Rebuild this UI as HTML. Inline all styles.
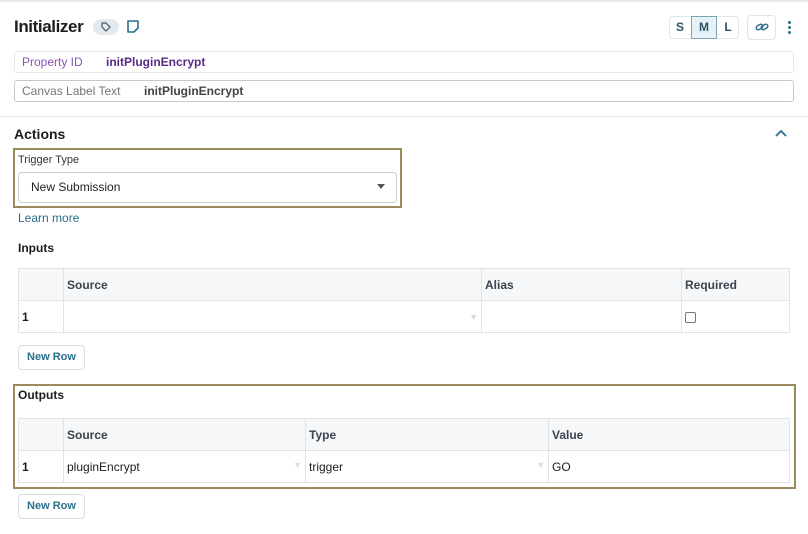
<!DOCTYPE html>
<html><head><meta charset="utf-8"><style>
*{box-sizing:border-box;margin:0;padding:0}
body{width:808px;height:534px;background:#fff;font-family:"Liberation Sans",sans-serif;position:relative;overflow:hidden;color:#1d1d1f}
.a{position:absolute}
.box{position:absolute;border:1px solid #ccc;border-radius:3px}
table{position:absolute;border-collapse:collapse;font-size:12px}
td{border:1px solid #dfe3e6;height:32px;padding:0 3px;vertical-align:middle}
tr.h td{background:#f5f7f8;font-weight:bold;color:#3a4550}
.btn{position:absolute;border:1px solid #d8e0e4;border-radius:4px;color:#2a6f8a;font-size:11px;font-weight:bold;text-align:center;line-height:23px;width:67px;height:25px}
.tri{color:#ddd;font-size:9px;float:right}
</style></head><body>
<div class="a" style="left:0;top:0;width:808px;height:2px;background:#e6eaec"></div>
<div class="a" style="left:14px;top:17px;font-size:17px;font-weight:bold;letter-spacing:-0.4px">Initializer</div>
<div class="a" style="left:93px;top:19px;width:26px;height:16px;border-radius:8px;background:#e4e9ee"></div>
<svg class="a" style="left:100px;top:21px" width="12" height="12" viewBox="0 0 12 12"><path d="M2 2h4l4 4-4 4-4-4z" fill="none" stroke="#3e5a6e" stroke-width="1.2"/></svg>
<svg class="a" style="left:126px;top:19px" width="14" height="15" viewBox="0 0 14 15"><path d="M2 2h10v7l-4 4H2z" fill="none" stroke="#2a6f8a" stroke-width="1.6" stroke-linejoin="round"/></svg>
<div class="a" style="left:669px;top:16px;width:70px;height:23px;border:1px solid #dbe5ea;border-radius:4px"></div>
<div class="a" style="left:691px;top:16px;width:26px;height:23px;border:1px solid #7fa5b4;background:#e6f2f5"></div>
<div class="a" style="left:669px;top:20px;width:22px;text-align:center;font-size:12px;font-weight:bold;color:#2d5467">S</div>
<div class="a" style="left:691px;top:20px;width:26px;text-align:center;font-size:12px;font-weight:bold;color:#2d5467">M</div>
<div class="a" style="left:717px;top:20px;width:22px;text-align:center;font-size:12px;font-weight:bold;color:#2d5467">L</div>
<div class="a" style="left:747px;top:15px;width:29px;height:25px;border:1px solid #dbe5ea;border-radius:4px"></div>
<svg class="a" style="left:755px;top:21px" width="14" height="12" viewBox="0 0 14 12"><g fill="none" stroke="#2a6f8a" stroke-width="1.4"><rect x="1" y="4" width="7" height="4" rx="2" transform="rotate(-30 4.5 6)"/><rect x="6" y="4" width="7" height="4" rx="2" transform="rotate(-30 9.5 6)"/></g></svg>
<div class="a" style="left:788px;top:21px;width:3px;height:3px;border-radius:2px;background:#2a6f8a;box-shadow:0 5px 0 #2a6f8a,0 10px 0 #2a6f8a"></div>
<div class="box" style="left:14px;top:51px;width:780px;height:22px;border-color:#ece4f0"></div>
<div class="a" style="left:22px;top:55px;font-size:12px;color:#8a55b0">Property ID</div>
<div class="a" style="left:106px;top:55px;font-size:12px;font-weight:bold;color:#5b2a86">initPluginEncrypt</div>
<div class="box" style="left:14px;top:80px;width:780px;height:22px;border-color:#c8c8c8"></div>
<div class="a" style="left:22px;top:84px;font-size:12px;color:#777">Canvas Label Text</div>
<div class="a" style="left:144px;top:84px;font-size:12px;font-weight:bold;color:#444">initPluginEncrypt</div>
<div class="a" style="left:0;top:116px;width:808px;height:1px;background:#e8eaec"></div>
<div class="a" style="left:14px;top:126px;font-size:14px;font-weight:bold">Actions</div>
<svg class="a" style="left:774px;top:128px" width="14" height="10" viewBox="0 0 14 10"><path d="M2 8l5-5 5 5" fill="none" stroke="#2a6f8a" stroke-width="1.8"/></svg>
<div class="a" style="left:13px;top:148px;width:389px;height:60px;border:2px solid #9a8a5c"></div>
<div class="a" style="left:18px;top:154px;font-size:11px;color:#333">Trigger Type</div>
<div class="box" style="left:18px;top:172px;width:379px;height:31px;border-radius:4px;border-color:#ccc"></div>
<div class="a" style="left:31px;top:180px;font-size:12px;color:#222">New Submission</div>
<div class="a" style="left:377px;top:184px;width:0;height:0;border-left:4px solid transparent;border-right:4px solid transparent;border-top:5px solid #555"></div>
<div class="a" style="left:18px;top:211px;font-size:12px;color:#2a6f8a">Learn more</div>
<div class="a" style="left:18px;top:241px;font-size:12px;font-weight:bold">Inputs</div>
<table style="left:18px;top:268px;width:772px">
<tr class="h"><td style="width:45px"></td><td style="width:418px">Source</td><td style="width:200px">Alias</td><td>Required</td></tr>
<tr><td style="font-weight:bold">1</td><td><span class="tri">▼</span></td><td></td><td><span style="display:inline-block;width:11px;height:11px;border:1px solid #777;border-radius:2px;vertical-align:middle"></span></td></tr>
</table>
<div class="btn" style="left:18px;top:345px">New Row</div>
<div class="a" style="left:13px;top:384px;width:783px;height:105px;border:2px solid #9a8a5c"></div>
<div class="a" style="left:18px;top:388px;font-size:12px;font-weight:bold">Outputs</div>
<table style="left:18px;top:418px;width:772px">
<tr class="h"><td style="width:45px"></td><td style="width:242px">Source</td><td style="width:243px">Type</td><td>Value</td></tr>
<tr><td style="font-weight:bold">1</td><td>pluginEncrypt<span class="tri">▼</span></td><td>trigger<span class="tri">▼</span></td><td>GO</td></tr>
</table>
<div class="btn" style="left:18px;top:494px">New Row</div>
</body></html>
